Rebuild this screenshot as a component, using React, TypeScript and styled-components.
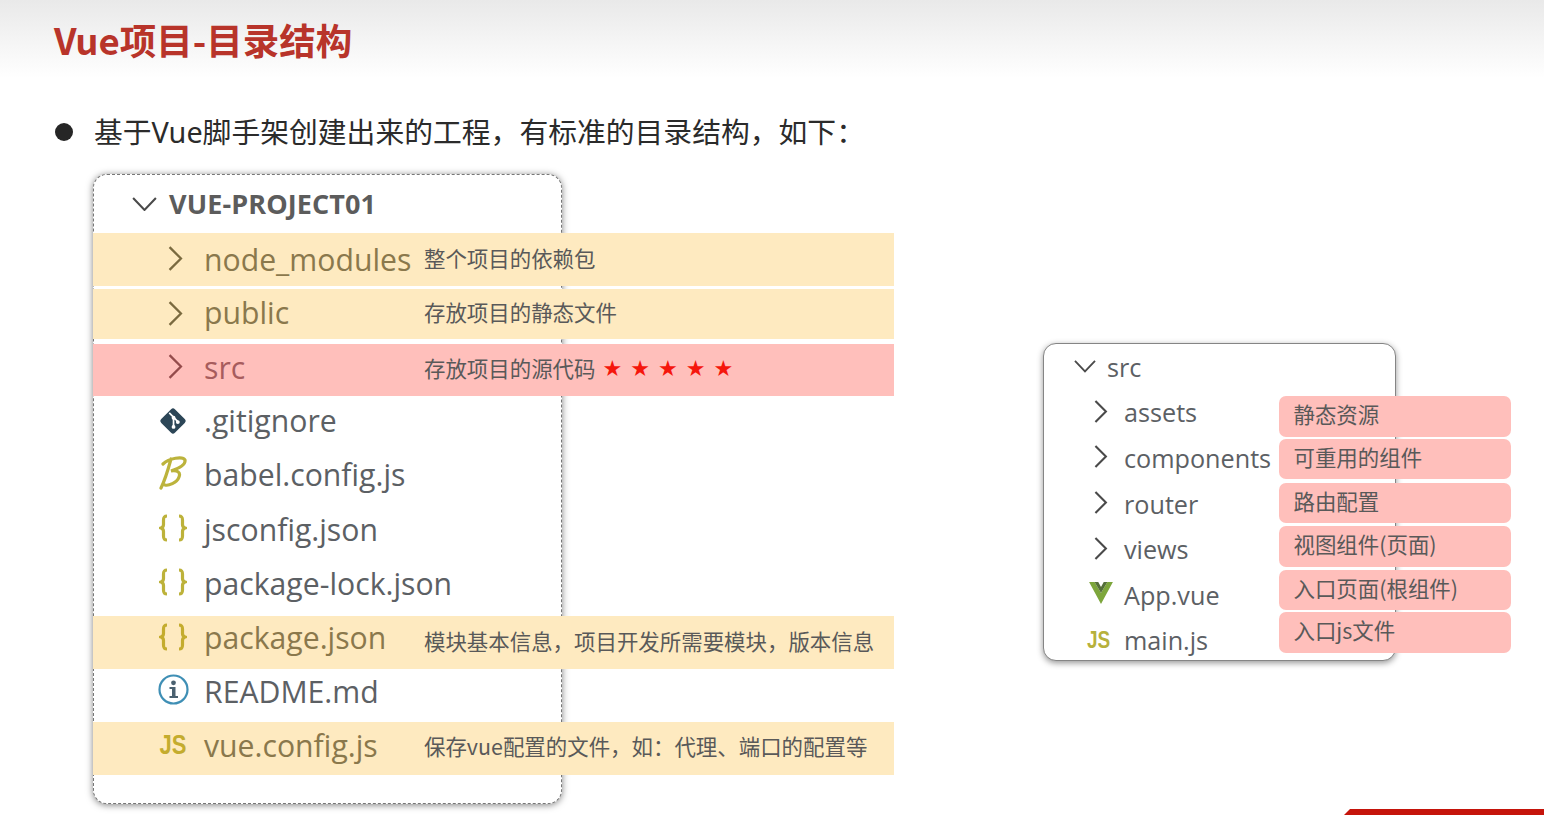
import React from "react";
import styled, { createGlobalStyle } from "styled-components";

const Global = createGlobalStyle`
  html, body { margin: 0; padding: 0; background: #fff; }
  #root { width: 1544px; height: 815px; overflow: hidden; }
`;

type Tone = "none" | "yellow" | "red";
const toneBg: Record<Tone, string> = { none: "transparent", yellow: "#feeac0", red: "#ffbfbb" };
const toneText: Record<Tone, string> = { none: "#5c6064", yellow: "#8a784c", red: "#a75c5d" };
const toneChevron: Record<Tone, string> = { none: "#4a4a4a", yellow: "#7a6a3f", red: "#944b4b" };

const Slide = styled.div`
  width: 1544px;
  height: 815px;
  display: flex;
  flex-direction: column;
  background: #fff;
  font-family: "Noto Sans CJK SC", "Noto Sans", sans-serif;
`;
const Header = styled.header`
  height: 78px;
  flex: none;
  display: flex;
  align-items: center;
  padding: 1px 0 0 54px;
  box-sizing: border-box;
  background: linear-gradient(to bottom, #e9e9e9 0%, #f4f4f4 50%, #ffffff 100%);
`;
const Title = styled.h1`
  margin: 0;
  font-size: 36.5px;
  font-weight: 700;
  line-height: 44px;
  color: #b8342a;
`;
const Lead = styled.div`
  height: 40px;
  margin-top: 34px;
  padding-left: 55px;
  display: flex;
  align-items: center;
  flex: none;
`;
const Bullet = styled.span`
  width: 18px;
  height: 18px;
  border-radius: 50%;
  background: #262626;
  margin-right: 21px;
`;
const LeadText = styled.span`
  font-family: "Noto Sans", "Noto Sans CJK SC", sans-serif;
  font-size: 28.8px;
  line-height: 36px;
  color: #2b2b2b;
  white-space: nowrap;
`;
const Columns = styled.div`
  display: flex;
  align-items: flex-start;
  margin-top: 22px;
  padding-left: 93px;
`;
const TreePanel = styled.section`
  width: 469px;
  height: 630px;
  box-sizing: border-box;
  flex: none;
  background: #fff;
  border: 1px dashed #777;
  border-radius: 14px;
  box-shadow: 0 1px 7px rgba(0, 0, 0, 0.5);
`;
const TreeHeader = styled.div`
  height: 58px;
  display: flex;
  align-items: center;
  padding-left: 38px;
`;
const RootName = styled.span`
  margin: 0 0 2px 12px;
  font-family: "Open Sans", "Noto Sans", sans-serif;
  font-size: 27px;
  font-weight: 700;
  letter-spacing: 0.1px;
  color: #5c5c5c;
`;
const Row = styled.div<{ $tone: Tone; $h: number; $gap: number }>`
  width: 801px;
  height: ${(p) => p.$h}px;
  margin: ${(p) => p.$gap}px 0 0 -1px;
  position: relative;
  display: flex;
  align-items: center;
  padding-left: 64px;
  box-sizing: border-box;
  background: ${(p) => toneBg[p.$tone]};
  color: ${(p) => toneText[p.$tone]};
`;
const IconSlot = styled.span<{ $lift: number }>`
  width: 32px;
  height: 34px;
  margin: 0 15px ${(p) => p.$lift * 2}px 0;
  flex: none;
  display: flex;
  align-items: center;
  justify-content: center;
`;
const FileName = styled.span<{ $lift: number }>`
  width: 220px;
  flex: none;
  margin-bottom: ${(p) => p.$lift * 2}px;
  font-family: "Open Sans", "Noto Sans", sans-serif;
  font-size: 30.2px;
  line-height: 40px;
  white-space: nowrap;
`;
const Note = styled.span<{ $lift: number }>`
  margin-bottom: ${(p) => p.$lift * 2}px;
  font-size: 21.45px;
  color: #595959;
  white-space: nowrap;
  display: flex;
  align-items: center;
`;
const Stars = styled.span`
  display: flex;
  gap: 8px;
  margin: 3px 0 0 7px;
  color: #f5160c;
  font-family: "DejaVu Sans", sans-serif;
  font-size: 22px;
  line-height: 24px;
`;
const JsMark = styled.span<{ $size: number; $color: string; $shift?: number }>`
  display: inline-block;
  font-family: "Liberation Sans", sans-serif;
  font-weight: 700;
  font-size: ${(p) => p.$size}px;
  line-height: 1;
  transform: scaleY(1.25);
  margin-right: ${(p) => p.$shift ?? 0}px;
  color: ${(p) => p.$color};
`;

const SrcPanel = styled.section`
  position: relative;
  width: 353px;
  height: 318px;
  margin: 169px 0 0 481px;
  flex: none;
  box-sizing: border-box;
  background: #fff;
  border: 1.5px solid #858585;
  border-radius: 13px;
  box-shadow: 0 2px 6px rgba(0, 0, 0, 0.42);
`;
const SrcRow = styled.div<{ $indent: number }>`
  height: 45.6px;
  display: flex;
  align-items: center;
  padding-left: ${(p) => p.$indent}px;
  color: #5c6064;
`;
const SrcIcon = styled.span`
  width: 34px;
  flex: none;
  margin-bottom: 2px;
  display: flex;
  align-items: center;
  justify-content: center;
`;
const SrcName = styled.span<{ $left: number }>`
  margin-left: ${(p) => p.$left}px;
  font-family: "Open Sans", "Noto Sans", sans-serif;
  font-size: 25.2px;
  line-height: 34px;
  white-space: nowrap;
`;
const TagList = styled.div`
  position: absolute;
  left: 234.5px;
  top: 51.5px;
  width: 232px;
`;
const Tag = styled.div<{ $h: number; $mb: number }>`
  height: ${(p) => p.$h}px;
  margin-bottom: ${(p) => p.$mb}px;
  padding: 0 0 5px 15px;
  box-sizing: border-box;
  display: flex;
  align-items: center;
  background: #ffbfbb;
  border-radius: 7px;
  font-size: 21.45px;
  color: #595959;
  white-space: nowrap;
`;
const FooterBar = styled.div`
  margin-top: auto;
  align-self: flex-end;
  width: 200px;
  height: 6px;
  flex: none;
  background: #c5140b;
  clip-path: polygon(6px 0, 100% 0, 100% 100%, 0 100%);
`;

const ChevronRight = ({ color, h = 25, inset = 5 }: { color: string; h?: number; inset?: number }) => (
  <svg width={h * 0.58} height={h} viewBox="0 0 14 24" fill="none" style={{ marginLeft: inset }}>
    <path d="M1.5 1 L12.5 12 L1.5 23" stroke={color} strokeWidth="2.2" />
  </svg>
);
const ChevronDown = ({ w = 24 }: { w?: number }) => (
  <svg width={w} height={w * 0.58} viewBox="0 0 24 14" fill="none">
    <path d="M1 1 L12 12.5 L23 1" stroke="#4a4a4a" strokeWidth="2" />
  </svg>
);
const GitIcon = () => (
  <svg width="30" height="30" viewBox="0 0 28 28">
    <rect x="5" y="5" width="18" height="18" rx="2.5" transform="rotate(45 14 14)" fill="#2c4657" />
    <path d="M10.5 6.5 L19 15 M14.5 11 L14.5 19.5" stroke="#fff" strokeWidth="1.6" fill="none" />
    <circle cx="14.5" cy="11" r="1.8" fill="#fff" />
    <circle cx="18.5" cy="15" r="1.8" fill="#fff" />
    <circle cx="14.5" cy="19.5" r="1.8" fill="#fff" />
  </svg>
);
const BabelIcon = () => (
  <svg width="28" height="34" viewBox="0 0 28 34" fill="none">
    <path
      d="M2 32 C5 26 9 14 12 3 M4 8 C10 2 24 0 26 4 C27 9 18 13 12 15 C18 14 22 16 20 21 C18 27 9 30 6 29"
      stroke="#bcb33c"
      strokeWidth="3.2"
      strokeLinecap="round"
    />
  </svg>
);
const Braces = ({ color }: { color: string }) => (
  <svg width="28" height="28" viewBox="0 0 28 28" fill="none">
    <path
      d="M8 2 C5 2 4.5 3.5 4.5 6 V10.5 C4.5 12.5 3.5 13.5 2 14 C3.5 14.5 4.5 15.5 4.5 17.5 V22 C4.5 24.5 5 26 8 26 M20 2 C23 2 23.5 3.5 23.5 6 V10.5 C23.5 12.5 24.5 13.5 26 14 C24.5 14.5 23.5 15.5 23.5 17.5 V22 C23.5 24.5 23 26 20 26"
      stroke={color}
      strokeWidth="3.2"
    />
  </svg>
);
const InfoIcon = () => (
  <svg width="31" height="31" viewBox="0 0 31 31" fill="none">
    <circle cx="15.5" cy="15.5" r="14" stroke="#3f8fb5" strokeWidth="2.2" />
    <circle cx="15.5" cy="8.8" r="2.4" fill="#4a6170" />
    <path d="M11.5 13 H17.5 V22 H20 V24 H11.5 V22 H14 V15 H11.5 Z" fill="#4a6170" />
  </svg>
);
const VueIcon = () => (
  <svg width="26" height="22" viewBox="0 0 26 24" style={{ marginBottom: 2 }}>
    <path d="M0 0 H6 L13 12 L20 0 H26 L13 24 Z" fill="#7da63c" />
    <path d="M6 0 H10 L13 5.5 L16 0 H20 L13 12 Z" fill="#56703a" />
  </svg>
);

type RowData = {
  name: string;
  tone: Tone;
  h: number;
  gap: number;
  icon: React.ReactNode;
  textLift: number;
  iconLift: number;
  noteLift?: number;
  note?: string;
  stars?: boolean;
};

const rows: RowData[] = [
  { name: "node_modules", tone: "yellow", h: 53, gap: 0, textLift: 0, iconLift: 1.5, noteLift: 2, icon: <ChevronRight color={toneChevron.yellow} />, note: "整个项目的依赖包" },
  { name: "public", tone: "yellow", h: 50, gap: 3, textLift: 1, iconLift: 1, noteLift: 2.5, icon: <ChevronRight color={toneChevron.yellow} />, note: "存放项目的静态文件" },
  { name: "src", tone: "red", h: 52, gap: 5, textLift: 2, iconLift: 4, noteLift: 3, icon: <ChevronRight color={toneChevron.red} />, note: "存放项目的源代码", stars: true },
  { name: ".gitignore", tone: "none", h: 54, gap: 0, textLift: 2, iconLift: 2, icon: <GitIcon /> },
  { name: "babel.config.js", tone: "none", h: 54, gap: 0, textLift: 2, iconLift: 4, icon: <BabelIcon /> },
  { name: "jsconfig.json", tone: "none", h: 54, gap: 0, textLift: 1, iconLift: 3, icon: <Braces color="#bdb23a" /> },
  { name: "package-lock.json", tone: "none", h: 54, gap: 0, textLift: 1, iconLift: 3, icon: <Braces color="#bdb23a" /> },
  { name: "package.json", tone: "yellow", h: 53, gap: 4, textLift: 5, iconLift: 6, noteLift: 2, icon: <Braces color="#c4ac2e" />, note: "模块基本信息，项目开发所需要模块，版本信息" },
  { name: "README.md", tone: "none", h: 53, gap: 0, textLift: 4, iconLift: 6, icon: <InfoIcon /> },
  { name: "vue.config.js", tone: "yellow", h: 53, gap: 0, textLift: 3, iconLift: 3.5, noteLift: 3, icon: <JsMark $size={22} $color="#c4ac2e">JS</JsMark>, note: "保存vue配置的文件，如：代理、端口的配置等" },
];

const srcRows: { name: string; icon: React.ReactNode }[] = [
  { name: "assets", icon: <ChevronRight color="#4a4a4a" h={23} inset={0} /> },
  { name: "components", icon: <ChevronRight color="#4a4a4a" h={23} inset={0} /> },
  { name: "router", icon: <ChevronRight color="#4a4a4a" h={23} inset={0} /> },
  { name: "views", icon: <ChevronRight color="#4a4a4a" h={23} inset={0} /> },
  { name: "App.vue", icon: <VueIcon /> },
  { name: "main.js", icon: <JsMark $size={19} $color="#b7b13c" $shift={5}>JS</JsMark> },
];

const tags = [
  { text: "静态资源", h: 41, mb: 2 },
  { text: "可重用的组件", h: 40, mb: 4 },
  { text: "路由配置", h: 40, mb: 3 },
  { text: "视图组件(页面)", h: 41, mb: 3 },
  { text: "入口页面(根组件)", h: 40, mb: 2 },
  { text: "入口js文件", h: 41, mb: 0 },
];

export default function App() {
  return (
    <Slide>
      <Global />
      <Header>
        <Title>Vue项目-目录结构</Title>
      </Header>
      <Lead>
        <Bullet />
        <LeadText>基于Vue脚手架创建出来的工程，有标准的目录结构，如下：</LeadText>
      </Lead>
      <Columns>
        <TreePanel>
          <TreeHeader>
            <ChevronDown w={25} />
            <RootName>VUE-PROJECT01</RootName>
          </TreeHeader>
          {rows.map((r) => (
            <Row key={r.name} $tone={r.tone} $h={r.h} $gap={r.gap}>
              <IconSlot $lift={r.iconLift}>{r.icon}</IconSlot>
              <FileName $lift={r.textLift}>{r.name}</FileName>
              {r.note && (
                <Note $lift={r.noteLift ?? 0}>
                  {r.note}
                  {r.stars && (
                    <Stars>
                      <span>★</span>
                      <span>★</span>
                      <span>★</span>
                      <span>★</span>
                      <span>★</span>
                    </Stars>
                  )}
                </Note>
              )}
            </Row>
          ))}
        </TreePanel>
        <SrcPanel>
          <SrcRow $indent={30}>
            <ChevronDown w={22} />
            <SrcName $left={11}>src</SrcName>
          </SrcRow>
          {srcRows.map((r) => (
            <SrcRow key={r.name} $indent={40}>
              <SrcIcon>{r.icon}</SrcIcon>
              <SrcName $left={6}>{r.name}</SrcName>
            </SrcRow>
          ))}
          <TagList>
            {tags.map((t) => (
              <Tag key={t.text} $h={t.h} $mb={t.mb}>
                {t.text}
              </Tag>
            ))}
          </TagList>
        </SrcPanel>
      </Columns>
      <FooterBar />
    </Slide>
  );
}
